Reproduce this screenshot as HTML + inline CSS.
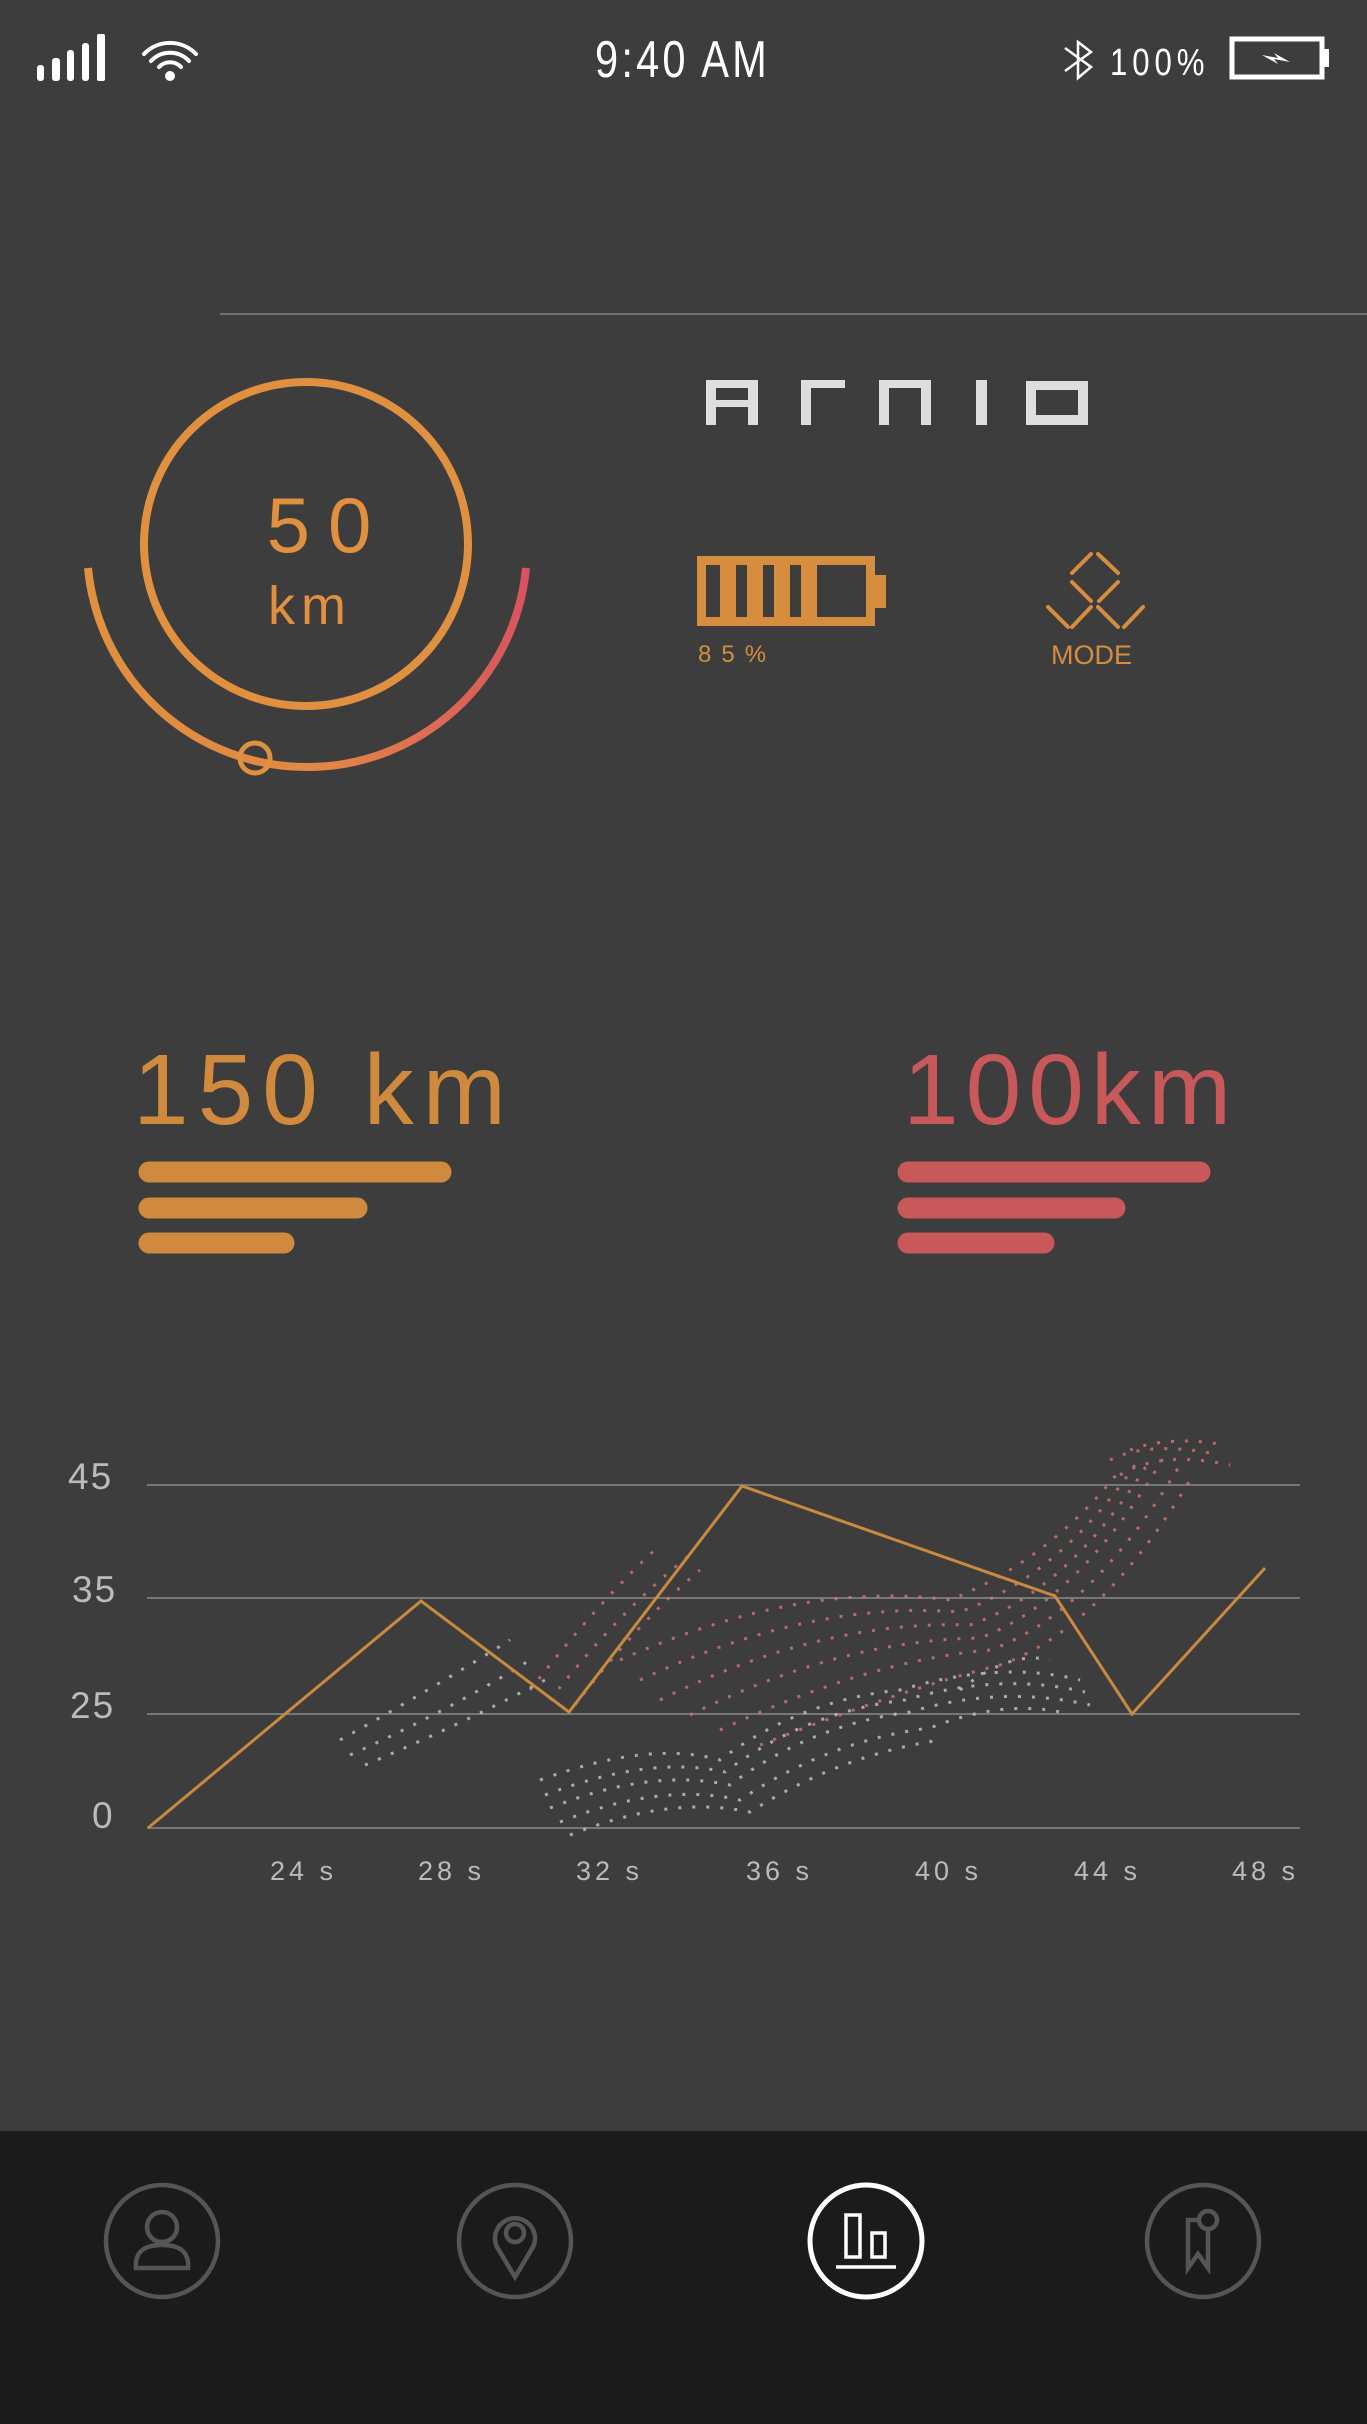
<!DOCTYPE html>
<html><head><meta charset="utf-8">
<style>
html,body{margin:0;padding:0;background:#3d3d3d;}
body{width:1367px;height:2424px;position:relative;overflow:hidden;font-family:"Liberation Sans",sans-serif;}
.t{position:absolute;white-space:nowrap;}
</style></head><body>
<svg width="1367" height="2424" style="position:absolute;left:0;top:0" xmlns="http://www.w3.org/2000/svg">
<defs>
<linearGradient id="ag" x1="0" y1="0" x2="1" y2="0">
<stop offset="0" stop-color="#e0903e"/><stop offset="0.55" stop-color="#e28646"/><stop offset="1" stop-color="#d9535e"/>
</linearGradient>
</defs>
<g fill="#fff">
<rect x="37" y="65" width="7" height="16" rx="3"/>
<rect x="52" y="58" width="8" height="23" rx="3"/>
<rect x="67" y="50" width="7" height="31" rx="3"/>
<rect x="82" y="43" width="7" height="38" rx="3"/>
<rect x="97" y="34" width="8" height="47" rx="2"/>
<circle cx="170" cy="76" r="5"/>
</g>
<g fill="none" stroke="#fff" stroke-width="4" stroke-linecap="round">
<path d="M159 67 A15 15 0 0 1 181 67"/>
<path d="M151 61 A26 26 0 0 1 189 61"/>
<path d="M144 54 A36 36 0 0 1 196 54"/>
</g>
<path d="M1065 48 L1091 67 L1078 78 L1078 42 L1091 52 L1065 71" fill="none" stroke="#fff" stroke-width="2.5"/>
<rect x="1232" y="39" width="90" height="38" fill="none" stroke="#fff" stroke-width="5"/>
<rect x="1322" y="49" width="7" height="18" fill="#fff"/>
<path d="M1262 55 L1278 58 L1274 53 L1290 62 L1274 59 L1278 64 Z" fill="#fff"/>
<rect x="220" y="313" width="1147" height="2" fill="#707070"/>
<circle cx="306" cy="544" r="162" fill="none" stroke="#e0903e" stroke-width="8"/>
<path d="M88 568 A220 220 0 0 0 526 568" fill="none" stroke="url(#ag)" stroke-width="8"/>
<circle cx="255" cy="758" r="15" fill="none" stroke="#e0903e" stroke-width="5"/>
<g fill="#dedede">
<path d="M706 380 H758 V425 H748 V407 H716 V425 H706 Z M716 388 V400 H748 V388 Z" fill-rule="evenodd"/>
<path d="M801 380 H845 V388 H811 V425 H801 Z"/>
<path d="M879 380 H931 V425 H921 V388 H889 V425 H879 Z"/>
<rect x="976" y="380" width="11" height="45"/>
<path d="M1026 381 H1088 V425 H1026 Z M1036 390 V415 H1078 V390 Z" fill-rule="evenodd"/>
</g>
<g fill="#d68d3e">
<path d="M697 556 H875 V626 H697 Z M706 565 V617 H866 V565 Z" fill-rule="evenodd"/>
<rect x="875" y="575" width="11" height="33"/>
<rect x="720" y="565" width="16" height="52"/>
<rect x="747" y="565" width="16" height="52"/>
<rect x="774" y="565" width="16" height="52"/>
<rect x="801" y="565" width="16" height="52"/>
</g>
<g stroke="#d68d3e" stroke-width="4" stroke-linecap="round">
<line x1="1072" y1="573" x2="1091" y2="554"/><line x1="1098" y1="554" x2="1118" y2="573"/>
<line x1="1072" y1="582" x2="1091" y2="601"/><line x1="1099" y1="601" x2="1118" y2="582"/>
<line x1="1048" y1="607" x2="1068" y2="627"/><line x1="1072" y1="627" x2="1091" y2="607"/>
<line x1="1098" y1="607" x2="1118" y2="627"/><line x1="1124" y1="627" x2="1143" y2="607"/>
</g>
<g stroke-linecap="round" stroke-width="21">
<g stroke="#d08a3e"><line x1="149" y1="1172" x2="441" y2="1172"/><line x1="149" y1="1208" x2="357" y2="1208"/><line x1="149" y1="1243" x2="284" y2="1243"/></g>
<g stroke="#c8585a"><line x1="908" y1="1172" x2="1200" y2="1172"/><line x1="908" y1="1208" x2="1115" y2="1208"/><line x1="908" y1="1243" x2="1044" y2="1243"/></g>
</g>
<g stroke="#777" stroke-width="2">
<line x1="147" y1="1485" x2="1300" y2="1485"/><line x1="147" y1="1598" x2="1300" y2="1598"/>
<line x1="147" y1="1714" x2="1300" y2="1714"/><line x1="147" y1="1828" x2="1300" y2="1828"/>
</g>
<g fill="none" stroke-dasharray="3 11" stroke-width="3" opacity="0.75">
<g stroke="#e07a78">
<path d="M530 1690 Q600 1600 660 1545"/><path d="M550 1700 Q620 1610 690 1555"/><path d="M575 1705 Q640 1620 700 1570"/>
<path d="M620 1660 Q800 1580 950 1600 Q1050 1560 1120 1470"/>
<path d="M640 1680 Q810 1600 960 1612 Q1060 1575 1135 1465"/>
<path d="M660 1700 Q820 1620 970 1625 Q1070 1590 1150 1460"/>
<path d="M690 1715 Q840 1640 980 1638 Q1080 1600 1165 1455"/>
<path d="M720 1730 Q870 1660 990 1650 Q1090 1615 1180 1465"/>
<path d="M760 1745 Q900 1690 1000 1665 Q1100 1630 1190 1480"/>
<path d="M1110 1460 Q1150 1440 1220 1455"/><path d="M1120 1475 Q1160 1450 1230 1465"/><path d="M1130 1450 Q1170 1435 1225 1445"/>
</g>
<g stroke="#d0d0d0">
<path d="M340 1740 Q430 1690 510 1640"/><path d="M350 1755 Q450 1710 530 1660"/><path d="M365 1765 Q460 1725 545 1680"/>
<path d="M540 1780 Q650 1740 720 1760 Q800 1700 900 1690 Q1000 1660 1080 1680"/>
<path d="M545 1795 Q650 1755 725 1772 Q805 1712 905 1700 Q1000 1672 1085 1692"/>
<path d="M550 1808 Q650 1768 730 1785 Q810 1725 910 1712 Q1000 1685 1090 1705"/>
<path d="M560 1822 Q660 1782 740 1800 Q830 1740 930 1728 Q1000 1700 1060 1712"/>
<path d="M570 1835 Q670 1795 750 1812 Q840 1755 940 1740"/>
<path d="M960 1690 Q1010 1650 1050 1660"/>
</g>
</g>
<polyline points="148,1828 421,1601 569,1712 742,1486 1055,1596 1132,1714 1265,1568" fill="none" stroke="#c98a3f" stroke-width="3"/>
<rect x="0" y="2131" width="1367" height="293" fill="#1b1b1b"/>
<g fill="none" stroke="#555" stroke-width="4.5">
<circle cx="162" cy="2241" r="56"/><circle cx="515" cy="2241" r="56"/><circle cx="1203" cy="2241" r="56"/>
<circle cx="162" cy="2227" r="15"/>
<path d="M136 2268 Q134 2245 162 2245 Q190 2245 188 2268 Z"/>
<path d="M515 2277 L497 2247 A20 20 0 1 1 533 2247 Z"/><circle cx="515" cy="2233" r="9"/>
<path d="M1197 2220 H1188 V2268 L1198 2254 L1208 2268 V2230"/><circle cx="1208" cy="2220" r="9"/>
</g>
<g fill="none" stroke="#fff" stroke-width="5">
<circle cx="866" cy="2241" r="56"/>
</g>
<g fill="none" stroke="#fff" stroke-width="3.5">
<rect x="846" y="2215" width="14" height="42"/><rect x="872" y="2233" width="13" height="24"/>
<line x1="836" y1="2267" x2="896" y2="2267"/>
</g>
</svg>
<div class="t" style="left:575px;top:30px;width:200px;text-align:center;color:#fff;font-size:52px;letter-spacing:4px;line-height:60px;transform:scaleX(0.8);transform-origin:center;">9:40 AM</div>
<div class="t" style="left:1110px;top:41px;color:#fff;font-size:38px;letter-spacing:6px;line-height:44px;transform:scaleX(0.82);transform-origin:left;">100%</div>
<div class="t" style="left:210px;top:480px;width:200px;text-align:center;color:#e0903e;font-size:78px;letter-spacing:18px;line-height:90px;padding-left:18px;">50</div>
<div class="t" style="left:210px;top:575px;width:200px;text-align:center;color:#e0903e;font-size:54px;letter-spacing:6px;line-height:62px;">km</div>
<div class="t" style="left:698px;top:640px;color:#d68d3e;font-size:24px;letter-spacing:10px;line-height:30px;">85%</div>
<div class="t" style="left:1051px;top:639px;color:#d68d3e;font-size:27px;line-height:32px;font-weight:300;">MODE</div>
<div class="t" style="left:133px;top:1035px;color:#d08a3e;font-size:100px;letter-spacing:9px;line-height:110px;">150 km</div>
<div class="t" style="left:903px;top:1035px;color:#c8585a;font-size:100px;letter-spacing:7px;line-height:110px;">100km</div>
<div class="t" style="left:68px;top:1455px;color:#bbb;font-size:37px;letter-spacing:2px;line-height:44px;">45</div>
<div class="t" style="left:72px;top:1568px;color:#bbb;font-size:37px;letter-spacing:2px;line-height:44px;">35</div>
<div class="t" style="left:70px;top:1684px;color:#bbb;font-size:37px;letter-spacing:2px;line-height:44px;">25</div>
<div class="t" style="left:92px;top:1794px;color:#bbb;font-size:37px;line-height:44px;">0</div>
<div style="position:absolute;top:1855px;left:0;width:1367px;color:#bbb;font-size:27px;letter-spacing:4px;line-height:32px;">
<span class="t" style="left:270px">24 s</span><span class="t" style="left:418px">28 s</span><span class="t" style="left:576px">32 s</span><span class="t" style="left:746px">36 s</span><span class="t" style="left:915px">40 s</span><span class="t" style="left:1074px">44 s</span><span class="t" style="left:1232px">48 s</span>
</div>
</body></html>
